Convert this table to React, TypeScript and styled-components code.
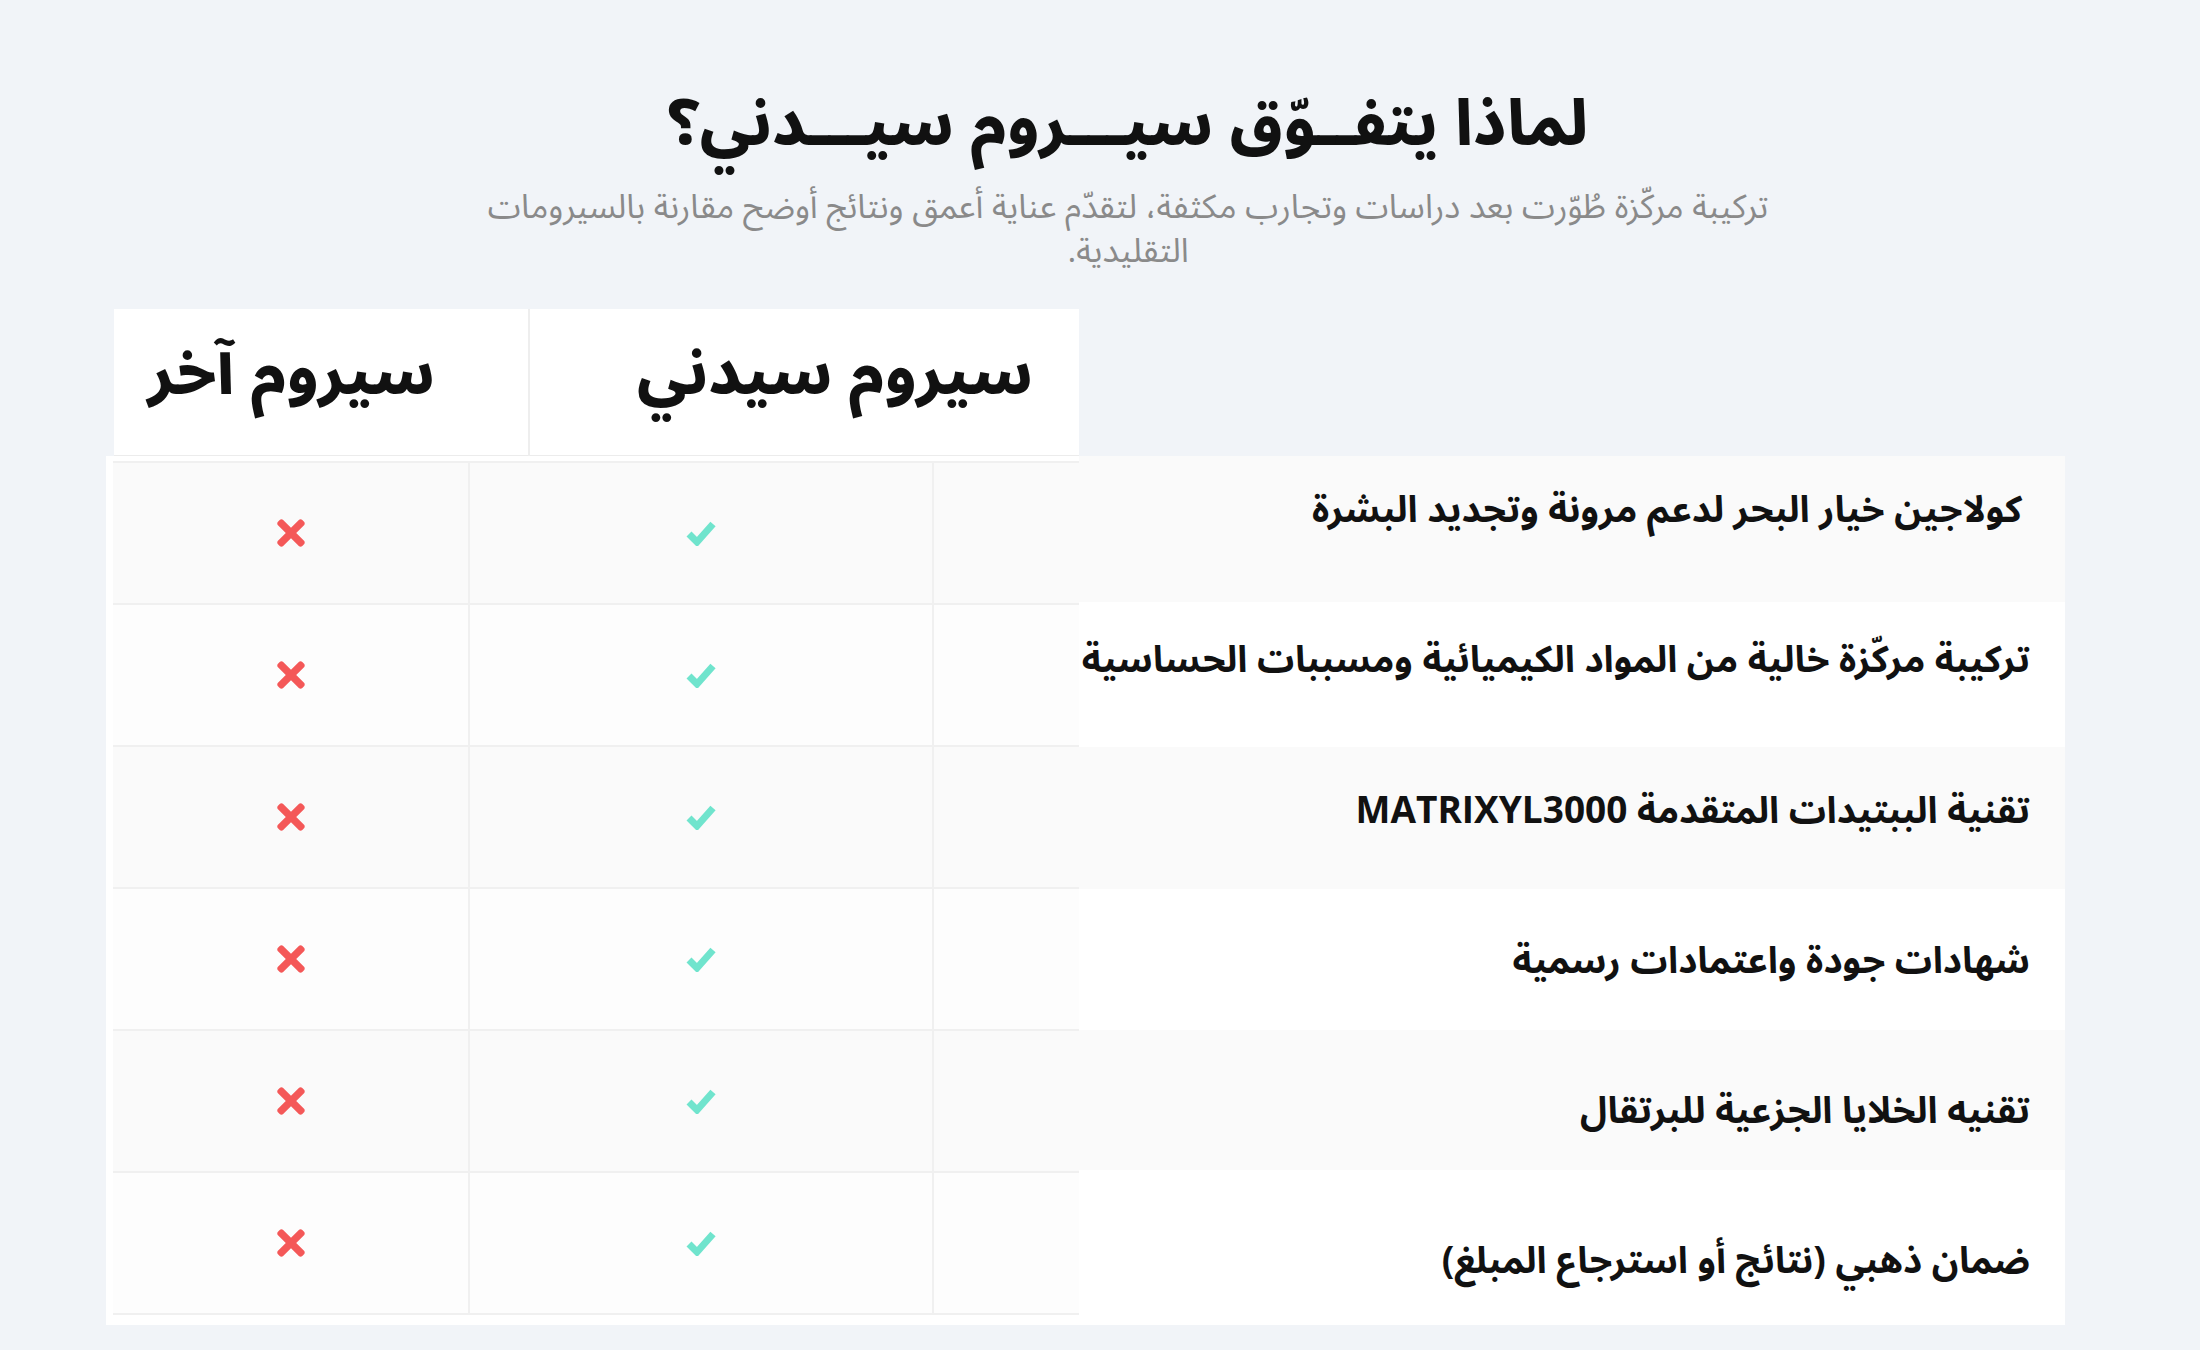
import React from "react";
import styled, { createGlobalStyle } from "styled-components";
import { FaTimes } from "react-icons/fa";

const GlobalStyle = createGlobalStyle`
  html, body {
    margin: 0;
    padding: 0;
    background: #f1f4f8;
  }
  body {
    font-family: "Open Sans", "Noto Sans Arabic", sans-serif;
    color: #111;
  }
  * { box-sizing: border-box; }
`;

const Page = styled.main`
  min-height: 1350px;
  background: #f1f4f8;
  padding-top: 81px;
  direction: rtl;
`;

const Intro = styled.header`
  display: flex;
  flex-direction: column;
  align-items: center;
  padding-left: 56px;
`;

const Title = styled.h2`
  margin: 0;
  font-size: 63px;
  line-height: 80px;
  font-weight: 800;
  color: #111;
`;

const Subtitle = styled.p`
  margin: 22px 0 0;
  max-width: 1340px;
  text-align: center;
  font-size: 33.5px;
  line-height: 44px;
  font-weight: 400;
  color: #8a8a8a;
`;

const Comparison = styled.section`
  display: flex;
  align-items: flex-start;
  margin: 38px 135px 0 106px;
`;

const FeatureColumn = styled.div`
  width: 986px;
  flex: none;
  padding-top: 147px;
  display: flex;
  flex-direction: column;
`;

const FeatureRow = styled.div<{ $shade: boolean; $h: number; $top: number; $inset: number }>`
  height: ${(p) => p.$h}px;
  padding-top: ${(p) => p.$top}px;
  padding-right: ${(p) => p.$inset}px;
  background: ${(p) => (p.$shade ? "#fafafa" : "#ffffff")};
  display: flex;
  align-items: flex-start;
`;

const FeatureText = styled.span`
  font-size: 37px;
  line-height: 50px;
  font-weight: 700;
  color: #111;
  white-space: nowrap;
`;

const TableArea = styled.div`
  flex: 1;
  position: relative;
  z-index: 1;
  display: flex;
  flex-direction: column;
`;

const HeaderRow = styled.div`
  margin-left: 8px;
  height: 147px;
  background: #ffffff;
  border-bottom: 1px solid #ececec;
  display: grid;
  grid-template-columns: 551px 1fr;
`;

const HeaderCell = styled.div<{ $pad: number; $divider?: boolean }>`
  display: flex;
  align-items: center;
  padding-right: ${(p) => p.$pad}px;
  padding-bottom: 16px;
  font-size: 62px;
  font-weight: 800;
  color: #111;
  white-space: nowrap;
  border-left: ${(p) => (p.$divider ? "2px solid #eeeeee" : "none")};
`;

const BodyBox = styled.div`
  background: #ffffff;
  padding: 5px 0 10px 7px;
`;

const BodyRow = styled.div<{ $shade: boolean }>`
  display: grid;
  grid-template-columns: 147px 464px 1fr;
  height: 142px;
  border-bottom: 2px solid #f0f0f0;
  background: ${(p) => (p.$shade ? "#fafafa" : "#fdfdfd")};
  &:first-child {
    border-top: 2px solid #f0f0f0;
    height: 144px;
  }
`;

const Cell = styled.div<{ $divider?: boolean }>`
  display: flex;
  align-items: center;
  justify-content: center;
  border-left: ${(p) => (p.$divider ? "2px solid #f0f0f0" : "none")};
`;

const CheckSvg = styled.svg`
  width: 30px;
  height: 26px;
  display: block;
`;

const No = styled(FaTimes)`
  color: #f45858;
  width: 40px;
  height: 40px;
`;

const CheckIcon = () => (
  <CheckSvg viewBox="0 0 30 26" aria-hidden="true">
    <polyline
      points="3,14 11,22 27,4"
      fill="none"
      stroke="#70e4cd"
      strokeWidth="7"
      strokeLinejoin="miter"
      strokeLinecap="butt"
    />
  </CheckSvg>
);

type Feature = { text: string; h: number; top: number; inset: number };

const features: Feature[] = [
  { text: "كولاجين خيار البحر لدعم مرونة وتجديد البشرة", h: 146, top: 27, inset: 43 },
  { text: "تركيبة مركّزة خالية من المواد الكيميائية ومسببات الحساسية", h: 145, top: 31, inset: 35 },
  { text: "تقنية الببتيدات المتقدمة MATRIXYL3000", h: 142, top: 37, inset: 35 },
  { text: "شهادات جودة واعتمادات رسمية", h: 141, top: 45, inset: 35 },
  { text: "تقنيه الخلايا الجزعية للبرتقال", h: 140, top: 54, inset: 35 },
  { text: "ضمان ذهبي (نتائج أو استرجاع المبلغ)", h: 155, top: 64, inset: 35 },
];

export default function App() {
  return (
    <>
      <GlobalStyle />
      <Page>
        <Intro>
          <Title>لماذا يتفــوّق سيـــروم سيـــدني؟</Title>
          <Subtitle>
            تركيبة مركّزة طُوّرت بعد دراسات وتجارب مكثفة، لتقدّم عناية أعمق ونتائج أوضح مقارنة بالسيرومات التقليدية.
          </Subtitle>
        </Intro>
        <Comparison>
          <FeatureColumn>
            {features.map((f, i) => (
              <FeatureRow key={i} $shade={i % 2 === 0} $h={f.h} $top={f.top} $inset={f.inset}>
                <FeatureText>{f.text}</FeatureText>
              </FeatureRow>
            ))}
          </FeatureColumn>
          <TableArea>
            <HeaderRow>
              <HeaderCell $pad={46} $divider>سيروم سيدني</HeaderCell>
              <HeaderCell $pad={93}>سيروم آخر</HeaderCell>
            </HeaderRow>
            <BodyBox>
              {features.map((f, i) => (
                <BodyRow key={i} $shade={i % 2 === 0}>
                  <Cell $divider />
                  <Cell $divider>
                    <CheckIcon />
                  </Cell>
                  <Cell>
                    <No />
                  </Cell>
                </BodyRow>
              ))}
            </BodyBox>
          </TableArea>
        </Comparison>
      </Page>
    </>
  );
}
